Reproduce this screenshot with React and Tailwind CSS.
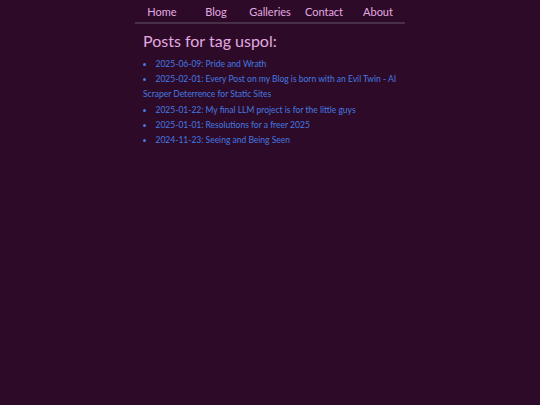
export default function App() {
  const nav = ['Home', 'Blog', 'Galleries', 'Contact', 'About'];
  const posts = [
    '2025-06-09: Pride and Wrath',
    '2025-02-01: Every Post on my Blog is born with an Evil Twin - AI Scraper Deterrence for Static Sites',
    '2025-01-22: My final LLM project is for the little guys',
    '2025-01-01: Resolutions for a freer 2025',
    '2024-11-23: Seeing and Being Seen',
  ];

  return (
    <div className="min-h-[405px] bg-[#2d0b28] font-['Lato','Noto_Sans',sans-serif]">
      <div className="mx-auto w-[270px]">
        <nav className="grid grid-cols-5 border-b-2 border-[#48304a] pt-[4px] pb-[2px]">
          {nav.map((n) => (
            <a key={n} href="#" className="text-center text-[11px] leading-[16px] text-[#e3a9e0]">
              {n}
            </a>
          ))}
        </nav>
        <div className="px-[8px]">
          <h1 className="mt-[7px] text-[16px] leading-[20px] text-[#e3a9e0]">Posts for tag uspol:</h1>
          <ul className="mt-[6px] list-disc list-inside text-[8.5px] leading-[15.2px] text-[#4479e0] marker:text-[#4479e0]">
            {posts.map((p) => (
              <li key={p}>
                <a href="#">{p}</a>
              </li>
            ))}
          </ul>
        </div>
      </div>
    </div>
  );
}
